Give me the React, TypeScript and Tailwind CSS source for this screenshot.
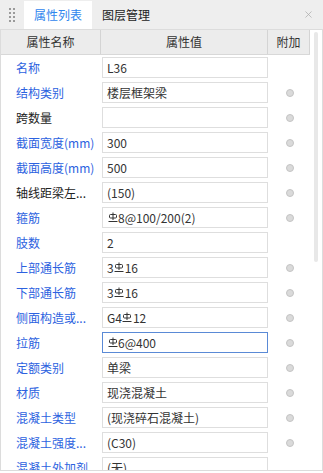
import React from "react";
import { X } from "lucide-react";

const Rebar = () => (
  <svg width="10" height="11" viewBox="0 0 10 11" className="inline-block align-[-1px] mx-[0.5px]" fill="none" stroke="#333" strokeWidth="1">
    <line x1="5" y1="0.5" x2="5" y2="8" />
    <rect x="1.5" y="2.5" width="7" height="3.5" rx="1" />
    <line x1="0.5" y1="9.5" x2="9.5" y2="9.5" />
  </svg>
);

type Row = { label: string; blue: boolean; value: React.ReactNode; dot: boolean; active?: boolean };

const rows: Row[] = [
  { label: "名称", blue: true, value: "L36", dot: false },
  { label: "结构类别", blue: true, value: "楼层框架梁", dot: true },
  { label: "跨数量", blue: false, value: "", dot: true },
  { label: "截面宽度(mm)", blue: true, value: "300", dot: true },
  { label: "截面高度(mm)", blue: true, value: "500", dot: true },
  { label: "轴线距梁左...", blue: false, value: "(150)", dot: true },
  { label: "箍筋", blue: true, value: <><Rebar />8@100/200(2)</>, dot: true },
  { label: "肢数", blue: true, value: "2", dot: false },
  { label: "上部通长筋", blue: true, value: <>3<Rebar />16</>, dot: true },
  { label: "下部通长筋", blue: true, value: <>3<Rebar />16</>, dot: true },
  { label: "侧面构造或...", blue: true, value: <>G4<Rebar />12</>, dot: true },
  { label: "拉筋", blue: true, value: <><Rebar />6@400</>, dot: true, active: true },
  { label: "定额类别", blue: true, value: "单梁", dot: true },
  { label: "材质", blue: true, value: "现浇混凝土", dot: true },
  { label: "混凝土类型", blue: true, value: "(现浇碎石混凝土)", dot: true },
  { label: "混凝土强度...", blue: true, value: "(C30)", dot: true },
  { label: "混凝土外加剂", blue: true, value: "(无)", dot: false },
];

export default function App() {
  return (
    <div
      className="w-[323px] h-[473px] overflow-hidden bg-white text-[12px] text-[#333]"
      style={{ fontFamily: '"Noto Sans CJK SC", "Noto Sans", sans-serif' }}
    >
      {/* Tab bar */}
      <div className="h-[29px] bg-[#eeeeee] flex items-end">
        <div className="w-[24px] h-full flex items-center justify-center">
          <div className="grid grid-cols-2 gap-x-[2px] gap-y-[2px]">
            {Array.from({ length: 8 }).map((_, i) => (
              <div key={i} className="w-[2px] h-[2px] bg-[#9a9a9a]" />
            ))}
          </div>
        </div>
        <div className="w-[68px] h-[28px] bg-white flex items-center justify-center text-[#2f86ee]">属性列表</div>
        <div className="w-[68px] h-[28px] flex items-center justify-center text-[#222]">图层管理</div>
        <div className="flex-1" />
        <div className="w-[30px] h-full flex items-center justify-center text-[#a8a8a8]">
          <X size={11} strokeWidth={1.5} />
        </div>
      </div>

      {/* Body */}
      <div className="h-[442px] border-t border-b border-l border-r border-[#dcdcdc] flex overflow-hidden">
        <div className="w-[309px] shrink-0">
          <div className="grid grid-cols-[100px_167px_42px] h-[25px] bg-[#ececec] border-b border-[#d8d8d8]">
            <div className="flex items-center justify-center border-r border-[#d4d4d4]">属性名称</div>
            <div className="flex items-center justify-center border-r border-[#d4d4d4]">属性值</div>
            <div className="flex items-center justify-center border-r border-[#d4d4d4]">附加</div>
          </div>
          {rows.map((r, i) => (
            <div key={i} className="grid grid-cols-[100px_167px_42px] h-[25px] items-center">
              <div className={`pl-[15px] whitespace-nowrap overflow-hidden ${r.blue ? "text-[#2c62e0]" : "text-[#222]"}`}>
                {r.label}
              </div>
              <div
                className={`ml-[1px] h-[21px] flex items-center pl-[4px] whitespace-nowrap overflow-hidden border ${
                  r.active ? "border-[#5a8ad6]" : "border-[#dedede]"
                }`}
              >
                {r.value}
              </div>
              <div className="flex items-center justify-center pl-[1px]">
                {r.dot && <div className="w-[8px] h-[8px] rounded-full bg-[#dadada] border border-[#c4c4c4]" />}
              </div>
            </div>
          ))}
        </div>
        <div className="flex-1 flex justify-center pt-[2px]">
          <div className="w-[4px] h-[230px] rounded-[2px] bg-[#e8e8e8]" />
        </div>
      </div>
    </div>
  );
}
